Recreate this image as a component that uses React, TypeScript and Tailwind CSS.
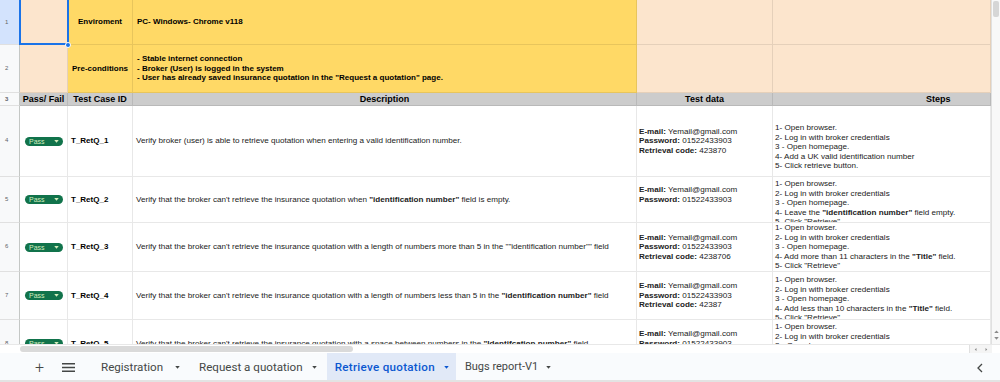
import React from 'react';

type Seg = { t: string; b?: boolean };
type Row = {
  n: number;
  h: number;
  id: string;
  desc: Seg[];
  data: [string, string][];
  steps: Seg[][];
  stepsPt: string;
};

const rows: Row[] = [
  {
    n: 4,
    h: 71,
    id: 'T_RetQ_1',
    desc: [{ t: 'Verify broker (user) is able to retrieve quotation when entering a valid identification number.' }],
    data: [
      ['E-mail:', 'Yemail@gmail.com'],
      ['Password:', '01522433903'],
      ['Retrieval code:', '423870'],
    ],
    steps: [
      [{ t: '1- Open browser.' }],
      [{ t: '2- Log in with broker credentials' }],
      [{ t: '3 - Open homepage.' }],
      [{ t: '4- Add a UK valid identification number' }],
      [{ t: '5- Click retrieve button.' }],
    ],
    stepsPt: 'pt-[17px]',
  },
  {
    n: 5,
    h: 46,
    id: 'T_RetQ_2',
    desc: [
      { t: "Verify that the broker can't retrieve the insurance quotation when " },
      { t: '"identification number"', b: true },
      { t: ' field is empty.' },
    ],
    data: [
      ['E-mail:', 'Yemail@gmail.com'],
      ['Password:', '01522433903'],
      ['', ''],
    ],
    steps: [
      [{ t: '1- Open browser.' }],
      [{ t: '2- Log in with broker credentials' }],
      [{ t: '3 - Open homepage.' }],
      [{ t: '4- Leave the ' }, { t: '"identification number"', b: true }, { t: ' field empty.' }],
      [{ t: '5- Click "Retrieve"' }],
    ],
    stepsPt: 'pt-[2px]',
  },
  {
    n: 6,
    h: 49,
    id: 'T_RetQ_3',
    desc: [
      {
        t: 'Verify that the broker can\'t retrieve the insurance quotation with a length of numbers more than 5 in the ""identification number"" field',
      },
    ],
    data: [
      ['E-mail:', 'Yemail@gmail.com'],
      ['Password:', '01522433903'],
      ['Retrieval code:', '4238706'],
    ],
    steps: [
      [{ t: '1- Open browser.' }],
      [{ t: '2- Log in with broker credentials' }],
      [{ t: '3 - Open homepage.' }],
      [{ t: '4- Add more than 11 characters in the ' }, { t: '"Title"', b: true }, { t: ' field.' }],
      [{ t: '5- Click "Retrieve"' }],
    ],
    stepsPt: 'pt-[0px]',
  },
  {
    n: 7,
    h: 48,
    id: 'T_RetQ_4',
    desc: [
      { t: "Verify that the broker can't retrieve the insurance quotation with a length of numbers less than 5 in the " },
      { t: '"identification number"', b: true },
      { t: ' field' },
    ],
    data: [
      ['E-mail:', 'Yemail@gmail.com'],
      ['Password:', '01522433903'],
      ['Retrieval code:', '42387'],
    ],
    steps: [
      [{ t: '1- Open browser.' }],
      [{ t: '2- Log in with broker credentials' }],
      [{ t: '3 - Open homepage.' }],
      [{ t: '4- Add less than 10 characters in the ' }, { t: '"Title"', b: true }, { t: ' field.' }],
      [{ t: '5- Click "Retrieve"' }],
    ],
    stepsPt: 'pt-[3px]',
  },
  {
    n: 8,
    h: 48,
    id: 'T_RetQ_5',
    desc: [
      { t: "Verify that the broker can't retrieve the insurance quotation with a space between numbers in the " },
      { t: '"Identifcation number"', b: true },
      { t: ' field' },
    ],
    data: [
      ['E-mail:', 'Yemail@gmail.com'],
      ['Password:', '01522433903'],
      ['Retrieval code:', '4238 70'],
    ],
    steps: [
      [{ t: '1- Open browser.' }],
      [{ t: '2- Log in with broker credentials' }],
      [{ t: '3 - Open homepage.' }],
      [{ t: '4- Add a space between numbers.' }],
      [{ t: '5- Click "Retrieve"' }],
    ],
    stepsPt: 'pt-[2px]',
  },
];

function Segs({ segs }: { segs: Seg[] }) {
  return (
    <>
      {segs.map((s, i) =>
        s.b ? (
          <b key={i} className="font-bold">
            {s.t}
          </b>
        ) : (
          <span key={i}>{s.t}</span>
        ),
      )}
    </>
  );
}

function Caret({ className }: { className: string }) {
  return (
    <svg width="6" height="4" viewBox="0 0 6 4" className={className}>
      <path d="M0 0h6L3 3.5z" fill="currentColor" />
    </svg>
  );
}

function PassBadge() {
  return (
    <div className="flex h-[9px] w-[38px] items-center justify-between rounded-full bg-[#11734b] pl-[4px] pr-[4px] text-[7px] leading-none text-[#d4edbc]">
      <span>Pass</span>
      <Caret className="h-[3px] w-[5px]" />
    </div>
  );
}

function RowNum({ n, h, active }: { n: number; h: number; active?: boolean }) {
  return (
    <div
      className={`flex w-[20px] shrink-0 items-center border-r border-b border-r-[#c4c7c5] border-b-[#e0e0e0] pl-[5px] text-[6px] text-[#5f6368] ${
        active ? 'bg-[#d3e3fd]' : 'bg-[#f8f9fa]'
      }`}
      style={{ height: h }}
    >
      {n}
    </div>
  );
}

export default function App() {
  const cell = 'shrink-0 border-r border-b border-black/[0.09] overflow-hidden';
  return (
    <div className="flex h-[382px] w-[1000px] flex-col overflow-hidden bg-white font-['Liberation_Sans',Arial,sans-serif] text-black">
      <div className="flex h-[344px]">
        <div className="relative h-[344px] w-[991px] overflow-hidden">
          {/* row 1 */}
          <div className="flex h-[45px]">
            <RowNum n={1} h={45} active />
            <div className={`${cell} w-[48px] bg-[#fce5cd]`} />
            <div className={`${cell} flex w-[65px] items-center justify-center bg-[#ffd966] text-[8px] font-bold`}>
              Enviroment
            </div>
            <div className={`${cell} flex w-[504px] items-center bg-[#ffd966] pl-[4px] text-[8px] font-bold`}>
              PC- Windows- Chrome v118
            </div>
            <div className={`${cell} w-[136px] bg-[#fce5cd]`} />
            <div className={`${cell} w-[218px] bg-[#fce5cd]`} />
          </div>
          {/* row 2 */}
          <div className="flex h-[48px]">
            <RowNum n={2} h={48} />
            <div className={`${cell} w-[48px] bg-[#fce5cd]`} />
            <div className={`${cell} flex w-[65px] items-center justify-center bg-[#ffd966] text-[8px] font-bold`}>
              Pre-conditions
            </div>
            <div className={`${cell} flex w-[504px] flex-col justify-center bg-[#ffd966] pl-[4px] text-[8px] leading-[9.7px] font-bold`}>
              <div>- Stable internet connection</div>
              <div>- Broker (User) is logged in the system</div>
              <div>- User has already saved insurance quotation in the "Request a quotation" page.</div>
            </div>
            <div className={`${cell} w-[136px] bg-[#fce5cd]`} />
            <div className={`${cell} w-[218px] bg-[#fce5cd]`} />
          </div>
          {/* header row */}
          <div className="flex h-[13px] text-[9px] leading-none font-bold">
            <RowNum n={3} h={13} />
            <div className={`${cell} flex w-[48px] items-center justify-center bg-[#cccccc]`}>Pass/ Fail</div>
            <div className={`${cell} flex w-[65px] items-center justify-center bg-[#cccccc]`}>Test Case ID</div>
            <div className={`${cell} flex w-[504px] items-center justify-center bg-[#cccccc]`}>Description</div>
            <div className={`${cell} flex w-[136px] items-center justify-center bg-[#cccccc]`}>Test data</div>
            <div className={`${cell} flex w-[218px] items-center bg-[#cccccc] pl-[153px]`}>Steps</div>
          </div>
          {rows.map((r) => (
            <div key={r.n} className="flex text-[8.1px] leading-[9.6px]" style={{ height: r.h }}>
              <RowNum n={r.n} h={r.h} />
              <div className={`${cell} flex w-[48px] items-center pl-[5px]`}>
                <PassBadge />
              </div>
              <div className={`${cell} flex w-[65px] items-center pl-[3px] text-[8px] font-bold`}>{r.id}</div>
              <div className={`${cell} flex w-[504px] items-center pl-[3px] whitespace-nowrap text-[#222]`}>
                <div>
                  <Segs segs={r.desc} />
                </div>
              </div>
              <div className={`${cell} flex w-[136px] flex-col justify-center pl-[2px] text-[#222]`}>
                {r.data.map(([k, v], i) => (
                  <div key={i} className="h-[9.6px] whitespace-nowrap">
                    <b className="font-bold">{k}</b>
                    {v ? ' ' + v : ''}
                  </div>
                ))}
              </div>
              <div className={`${cell} w-[218px] pl-[2px] text-[#222] ${r.stepsPt}`}>
                {r.steps.map((s, i) => (
                  <div key={i} className="whitespace-nowrap">
                    <Segs segs={s} />
                  </div>
                ))}
              </div>
            </div>
          ))}
          {/* selected cell A1 */}
          <div className="pointer-events-none absolute top-[-2px] left-[19px] h-[47px] w-[50px] border-2 border-[#1a73e8]" />
          <div className="absolute top-[42px] left-[65px] h-[6px] w-[6px] rounded-full border border-white bg-[#1a73e8]" />
        </div>
        {/* vertical scrollbar */}
        <div className="flex w-[9px] flex-col items-center border-l border-[#e0e0e0] bg-[#f8f8f8]">
          <div className="mt-[1px] h-[16px] w-[6px] rounded-[2px] bg-[#d6d6d6]" />
          <div className="flex-1" />
          <Caret className="mb-[4px] h-[3px] w-[5px] rotate-180 text-[#8a8a8a]" />
          <Caret className="mb-[4px] h-[3px] w-[5px] text-[#8a8a8a]" />
        </div>
      </div>
      {/* horizontal scrollbar */}
      <div className="flex h-[9px] items-center border-t border-[#e8e8e8] bg-white">
        <div className="ml-[20px] h-[6px] w-[333px] rounded-[3px] bg-[#dadada]" />
        <div className="flex-1" />
        <div className="mr-[8px] flex h-[9px] items-center gap-[8px] border-l border-[#e0e0e0] bg-[#f4f4f4] px-[4px] text-[#8a8a8a]">
          <Caret className="h-[5px] w-[3px] rotate-90" />
          <Caret className="h-[5px] w-[3px] -rotate-90" />
        </div>
      </div>
      {/* sheet tabs */}
      <div className="flex h-[29px] items-stretch border-b-2 border-[#e3e3e3] bg-[#f9fbfd] pt-[2px] font-['Roboto',Arial,sans-serif] text-[11.6px] text-[#444746]">
        <div className="flex w-[56px] items-center justify-end pr-[12px] text-[16px] font-light">+</div>
        <div className="flex w-[24px] items-center justify-center">
          <svg width="13" height="9" viewBox="0 0 13 9">
            <path d="M0 0.75h13M0 4.5h13M0 8.25h13" stroke="#444746" strokeWidth="1.3" />
          </svg>
        </div>
        <div className="ml-[21px] flex items-center gap-[12px]">
          <span>Registration</span>
          <Caret className="h-[3px] w-[5px]" />
        </div>
        <div className="ml-[19px] flex items-center gap-[9px]">
          <span>Request a quotation</span>
          <Caret className="h-[3px] w-[5px]" />
        </div>
        <div className="-mt-[2px] ml-[10px] flex items-center gap-[9px] bg-[#e1e9f7] pt-[2px] pr-[7px] pl-[8px] font-medium tracking-[0.3px] text-[#0b57d0]">
          <span>Retrieve quotation</span>
          <Caret className="h-[3px] w-[5px]" />
        </div>
        <div className="ml-[9px] flex items-center gap-[8px] text-[11px]">
          <span>Bugs report-V1</span>
          <Caret className="h-[3px] w-[5px]" />
        </div>
        <div className="flex-1" />
        <div className="mr-[17px] flex items-center">
          <svg width="7" height="10" viewBox="0 0 7 10">
            <path d="M6 1L2 5l4 4" stroke="#444746" strokeWidth="1.3" fill="none" />
          </svg>
        </div>
      </div>
    </div>
  );
}
